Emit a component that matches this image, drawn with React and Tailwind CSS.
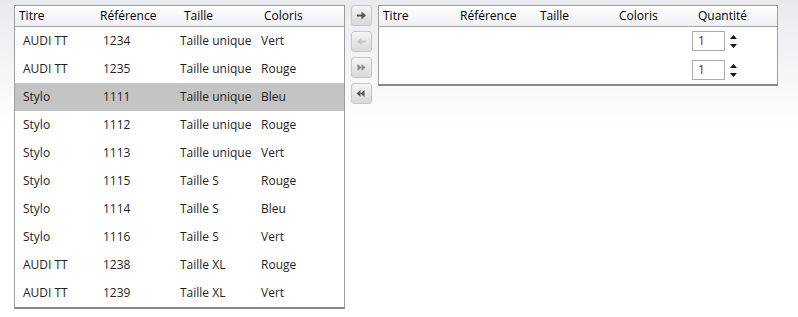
import React from 'react';

const products = [
  { titre: 'AUDI TT', ref: '1234', taille: 'Taille unique', coloris: 'Vert' },
  { titre: 'AUDI TT', ref: '1235', taille: 'Taille unique', coloris: 'Rouge' },
  { titre: 'Stylo', ref: '1111', taille: 'Taille unique', coloris: 'Bleu', selected: true },
  { titre: 'Stylo', ref: '1112', taille: 'Taille unique', coloris: 'Rouge' },
  { titre: 'Stylo', ref: '1113', taille: 'Taille unique', coloris: 'Vert' },
  { titre: 'Stylo', ref: '1115', taille: 'Taille S', coloris: 'Rouge' },
  { titre: 'Stylo', ref: '1114', taille: 'Taille S', coloris: 'Bleu' },
  { titre: 'Stylo', ref: '1116', taille: 'Taille S', coloris: 'Vert' },
  { titre: 'AUDI TT', ref: '1238', taille: 'Taille XL', coloris: 'Rouge' },
  { titre: 'AUDI TT', ref: '1239', taille: 'Taille XL', coloris: 'Vert' },
];

const cart = [{ qty: 1 }, { qty: 1 }];

const ArrowIcon = ({ kind, color }) => {
  const paths = {
    right: <path d="M1 4h4.5V1L10 5 5.5 9V6H1z" />,
    left: <path d="M10 4H5.5V1L1 5l4.5 4V6H10z" />,
    allRight: <path d="M1.5 1.5 5.5 5 1.5 8.5zM5.5 1.5 9.5 5 5.5 8.5z" />,
    allLeft: <path d="M8.5 1.5 4.5 5 8.5 8.5zM4.5 1.5 0.5 5 4.5 8.5z" />,
  };
  return (
    <svg width="11" height="11" viewBox="0 0 11 10" fill={color}>
      {paths[kind]}
    </svg>
  );
};

const MoveButton = ({ kind, color }) => (
  <button
    type="button"
    className="w-[21px] h-[21px] flex items-center justify-center rounded-[3px] border border-[#c6c6c6] bg-gradient-to-b from-[#f5f5f5] to-[#d9d9d9]"
  >
    <ArrowIcon kind={kind} color={color} />
  </button>
);

const Spinner = ({ value }) => (
  <div className="flex items-center gap-[5px]">
    <div className="w-[33px] h-[20px] border border-[#a9a9a9] bg-white flex items-center pl-[5px] text-[12px] text-[#5a1450]">
      {value}
    </div>
    <div className="flex flex-col gap-[5px]">
      <svg width="7" height="4" viewBox="0 0 7 4" fill="#111">
        <path d="M3.5 0 7 4H0z" />
      </svg>
      <svg width="7" height="4" viewBox="0 0 7 4" fill="#111">
        <path d="M0 0h7L3.5 4z" />
      </svg>
    </div>
  </div>
);

export default function App() {
  return (
    <div
      className="w-[798px] h-[317px] overflow-hidden bg-gradient-to-b from-[#e9eaee] to-white to-40% text-[12px] text-[#1e1e1e]"
      style={{ fontFamily: '"Open Sans", "Liberation Sans", sans-serif' }}
    >
      <div className="flex items-start pt-[5px] pl-[14px] gap-[6px]">
        {/* product list */}
        <div className="w-[331px] bg-white border border-[#9c9c9c] border-b-2 border-b-[#8a8a8a]">
          <div className="flex h-[21px] items-center border-b border-[#a3a3a3] bg-gradient-to-b from-white to-[#eef0f4] text-black">
            <div className="w-[80px] pl-[4px]">Titre</div>
            <div className="w-[78px] pl-[5px]">Référence</div>
            <div className="w-[80px] pl-[11px]">Taille</div>
            <div className="flex-1 pl-[11px]">Coloris</div>
          </div>
          {products.map((p, i) => (
            <div
              key={i}
              className={`flex h-[28px] items-center ${p.selected ? 'bg-[#c4c4c4]' : ''}`}
            >
              <div className="w-[80px] pl-[8px]">{p.titre}</div>
              <div className="w-[78px] pl-[8px]">{p.ref}</div>
              <div className="w-[80px] pl-[7px]">{p.taille}</div>
              <div className="flex-1 pl-[8px]">{p.coloris}</div>
            </div>
          ))}
        </div>

        {/* move buttons */}
        <div className="flex flex-col gap-[5px]">
          <MoveButton kind="right" color="#555" />
          <MoveButton kind="left" color="#c4c4c4" />
          <MoveButton kind="allRight" color="#8a8a8a" />
          <MoveButton kind="allLeft" color="#555" />
        </div>

        {/* selection */}
        <div className="w-[400px] bg-white border border-[#9c9c9c] border-b-2 border-b-[#8a8a8a]">
          <div className="flex h-[21px] items-center border-b border-[#a3a3a3] bg-gradient-to-b from-white to-[#eef0f4] text-black">
            <div className="w-[77px] pl-[4px]">Titre</div>
            <div className="w-[79px] pl-[4px]">Référence</div>
            <div className="w-[79px] pl-[5px]">Taille</div>
            <div className="w-[79px] pl-[5px]">Coloris</div>
            <div className="flex-1 pl-[5px]">Quantité</div>
          </div>
          <div className="flex flex-col pt-[4px] pb-[4px] gap-[9px]">
            {cart.map((c, i) => (
              <div key={i} className="flex items-center h-[20px]">
                <div className="w-[313px]" />
                <Spinner value={c.qty} />
              </div>
            ))}
          </div>
        </div>
      </div>
    </div>
  );
}
